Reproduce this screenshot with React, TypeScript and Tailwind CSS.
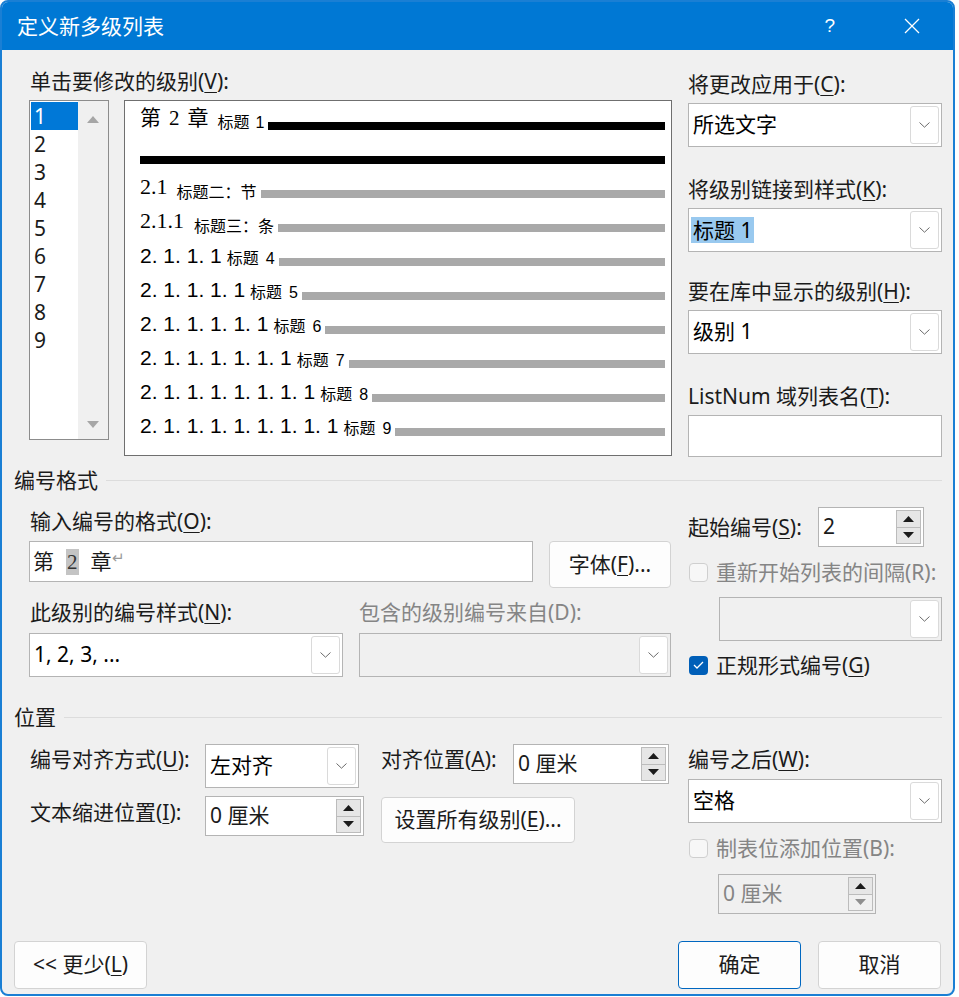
import React from "react";

const ui = "font-['Noto_Sans','Noto_Sans_CJK_SC',sans-serif]";

function U({ children }: { children: React.ReactNode }) {
  return <span className="underline underline-offset-[3px] decoration-1">{children}</span>;
}

function Chevron() {
  return (
    <svg width="11" height="6" viewBox="0 0 11 6" className="block">
      <polyline points="0.5,0.5 5.5,5.2 10.5,0.5" fill="none" stroke="#6b6b6b" strokeWidth="1" />
    </svg>
  );
}

function Tri({ up = false, color = "#1b1b1b" }: { up?: boolean; color?: string }) {
  return (
    <svg width="11" height="6" viewBox="0 0 11 6" className="block">
      {up ? <polygon points="0,6 11,6 5.5,0" fill={color} /> : <polygon points="0,0 11,0 5.5,6" fill={color} />}
    </svg>
  );
}

function Label({ children, className = "", disabled = false }: { children: React.ReactNode; className?: string; disabled?: boolean }) {
  return (
    <div className={`h-[28px] flex items-center leading-[28px] whitespace-nowrap ${disabled ? "text-[#858585]" : "text-[#1b1b1b]"} ${className}`}>
      {children}
    </div>
  );
}

function Combo({ children, className = "", disabled = false }: { children?: React.ReactNode; className?: string; disabled?: boolean }) {
  return (
    <div className={`flex h-[44px] border border-[#b4b4b4] ${disabled ? "bg-[#f0f0f0]" : "bg-white"} ${className}`}>
      <div className="flex-1 flex items-center pl-[4px] overflow-hidden whitespace-nowrap">{children}</div>
      <div className="w-[29px] my-[2px] mr-[2px] rounded-[3px] border border-[#dadada] bg-white flex items-center justify-center">
        <Chevron />
      </div>
    </div>
  );
}

function Spin({ value, className = "", disabled = false }: { value: string; className?: string; disabled?: boolean }) {
  return (
    <div className={`flex h-[40px] border border-[#b4b4b4] ${disabled ? "bg-[#f0f0f0] text-[#858585]" : "bg-white text-[#1b1b1b]"} ${className}`}>
      <div className="flex-1 flex items-center pl-[4px] whitespace-nowrap">{value}</div>
      <div className="w-[27px] flex flex-col py-[2px] pr-[2px]">
        <div className="flex-1 border border-[#bcbcbc] bg-[#e6e6e6] flex items-center justify-center">
          <Tri up />
        </div>
        <div className={`flex-1 border border-t-0 border-[#bcbcbc] flex items-center justify-center ${disabled ? "bg-[#f0f0f0]" : "bg-[#e6e6e6]"}`}>
          <Tri color={disabled ? "#8f8f8f" : "#1b1b1b"} />
        </div>
      </div>
    </div>
  );
}

function Btn({ children, className = "", primary = false }: { children: React.ReactNode; className?: string; primary?: boolean }) {
  return (
    <div
      className={`flex items-center justify-center rounded-[4px] border bg-[#fdfdfd] text-[#1b1b1b] whitespace-nowrap ${
        primary ? "border-[#0067c0]" : "border-[#d3d3d3]"
      } ${className}`}
    >
      {children}
    </div>
  );
}

function Check({ checked = false }: { checked?: boolean }) {
  if (checked) {
    return (
      <div className="w-[19px] h-[19px] rounded-[4px] bg-[#005fb8] flex items-center justify-center">
        <svg width="11" height="8" viewBox="0 0 11 8">
          <polyline points="1,4 4,7 10,1" fill="none" stroke="white" strokeWidth="1.3" />
        </svg>
      </div>
    );
  }
  return <div className="w-[19px] h-[19px] rounded-[4px] border border-[#cfcfcf] bg-[#f7f7f7]" />;
}

function Heading({ text, className = "" }: { text: string; className?: string }) {
  return (
    <div className={`flex items-center h-[28px] pl-[12px] pr-[11px] ${className}`}>
      <span className="leading-[28px] text-[#1b1b1b]">{text}</span>
      <div className="flex-1 h-px bg-[#dcdcdc] ml-[8px]" />
    </div>
  );
}

const deep = ["2. 1. 1. 1", "2. 1. 1. 1. 1", "2. 1. 1. 1. 1. 1", "2. 1. 1. 1. 1. 1. 1", "2. 1. 1. 1. 1. 1. 1. 1", "2. 1. 1. 1. 1. 1. 1. 1. 1"];

function Preview() {
  const small = "text-[16px] leading-none font-['Noto_Sans_CJK_SC',sans-serif] relative top-[1px]";
  return (
    <div className="w-[548px] h-[356px] border border-[#6f6f6f] bg-white pl-[15px] pr-[6px] flex flex-col">
      <div className="h-[29px] flex items-end">
        <span className="text-[21px] leading-none font-['Liberation_Serif','Noto_Sans_CJK_SC',serif] relative top-[-1px]">
          第<span className="ml-[8px]">2</span>
          <span className="ml-[8px]">章</span>
        </span>
        <span className={`ml-[9px] ${small}`}>
          标题<span className="ml-[6px] font-['Liberation_Sans',sans-serif]">1</span>
        </span>
        <div className="flex-1 h-[8px] bg-black ml-[4px]" />
      </div>
      <div className="h-[34px] flex items-end">
        <div className="flex-1 h-[8px] bg-black" />
      </div>
      <div className="h-[34px] flex items-end">
        <span className="text-[22px] leading-none font-['Liberation_Serif',serif]">2.1</span>
        <span className={`ml-[9px] ${small}`}>标题二：节</span>
        <div className="flex-1 h-[8px] bg-[#a9a9a9] ml-[4px]" />
      </div>
      <div className="h-[34px] flex items-end">
        <span className="text-[22px] leading-none font-['Liberation_Serif',serif]">2.1.1</span>
        <span className={`ml-[10px] ${small}`}>标题三：条</span>
        <div className="flex-1 h-[8px] bg-[#a9a9a9] ml-[4px]" />
      </div>
      {deep.map((n, i) => (
        <div key={n} className="h-[34px] flex items-end">
          <span className="text-[21px] leading-none font-['Liberation_Sans',sans-serif]">{n}</span>
          <span className={`ml-[5px] ${small}`}>
            标题<span className="ml-[7px] font-['Liberation_Sans',sans-serif]">{i + 4}</span>
          </span>
          <div className="flex-1 h-[8px] bg-[#a9a9a9] ml-[4px]" />
        </div>
      ))}
    </div>
  );
}

function LevelList() {
  return (
    <div className="flex w-[80px] h-[340px] border border-[#8c8c8c] bg-white">
      <div className="w-[48px] pt-[1px] pl-[1px] flex flex-col">
        {[1, 2, 3, 4, 5, 6, 7, 8, 9].map((n) => (
          <div
            key={n}
            className={`h-[28px] pl-[3px] leading-[28px] text-[21px] ${n === 1 ? "bg-[#0078d7] text-white" : "text-[#1b1b1b]"}`}
          >
            {n}
          </div>
        ))}
      </div>
      <div className="flex-1 bg-[#f0f0f0] flex flex-col items-center justify-between pt-[15px] pb-[11px]">
        <svg width="12" height="7" viewBox="0 0 12 7"><polygon points="0,7 12,7 6,0" fill="#a6a6a6" /></svg>
        <svg width="12" height="7" viewBox="0 0 12 7"><polygon points="0,0 12,0 6,7" fill="#a6a6a6" /></svg>
      </div>
    </div>
  );
}

export default function App() {
  return (
    <div className={`w-[959px] h-[997px] bg-white overflow-hidden ${ui} text-[21px]`}>
      <div className="w-[955px] h-[996px] rounded-[8px] border-2 border-[#1a7fd4] bg-[#f0f0f0] overflow-hidden flex flex-col">
        {/* title bar */}
        <div className="h-[48px] bg-[#0078d4] flex items-center pl-[15px] text-white shrink-0">
          <span className="leading-[28px]">定义新多级列表</span>
          <span className="ml-auto text-[19px] font-light font-['Liberation_Sans',sans-serif] mr-[69px]">?</span>
          <svg width="16" height="16" viewBox="0 0 16 16" className="mr-[33px]">
            <line x1="1" y1="1" x2="15" y2="15" stroke="white" strokeWidth="1.3" />
            <line x1="15" y1="1" x2="1" y2="15" stroke="white" strokeWidth="1.3" />
          </svg>
        </div>

        {/* levels / preview / right fields */}
        <div className="flex h-[407px] shrink-0">
          <div className="ml-[27px] w-[643px]">
            <Label className="mt-[17px] pl-[1px]">
              单击要修改的级别(<U>V</U>):
            </Label>
            <div className="mt-[5px] flex items-start">
              <LevelList />
              <div className="ml-[15px]">
                <Preview />
              </div>
            </div>
          </div>
          <div className="ml-[16px] w-[254px]">
            <Label className="mt-[20px]">
              将更改应用于(<U>C</U>):
            </Label>
            <Combo className="mt-[5px]">所选文字</Combo>
            <Label className="mt-[28px]">
              将级别链接到样式(<U>K</U>):
            </Label>
            <Combo className="mt-[5px]">
              <span className="bg-[#99c9ef] -ml-[2px] px-[2px] leading-[26px]">标题 1</span>
            </Combo>
            <Label className="mt-[25px]">
              要在库中显示的级别(<U>H</U>):
            </Label>
            <Combo className="mt-[5px]">级别 1</Combo>
            <Label className="mt-[28px]">
              ListNum 域列表名(<U>T</U>):
            </Label>
            <div className="mt-[5px] h-[42px] border border-[#b4b4b4] bg-white" />
          </div>
        </div>

        <Heading text="编号格式" className="mt-[9px]" />

        {/* number format */}
        <div className="flex h-[185px] shrink-0">
          <div className="ml-[27px] w-[643px]">
            <Label className="mt-[13px] pl-[1px]">
              输入编号的格式(<U>O</U>):
            </Label>
            <div className="mt-[6px] flex items-start">
              <div className="w-[504px] h-[41px] border border-[#b4b4b4] bg-white flex items-center pl-[3px] text-[#1b1b1b]">
                <span>第</span>
                <span className="ml-[12px] bg-[#c4c4c4] px-[1px] leading-[26px] font-['Liberation_Serif',serif] text-[#333]">2</span>
                <span className="ml-[12px]">章</span>
                <span className="text-[#9a9a9a] text-[15px] relative top-[-4px]">↵</span>
              </div>
              <Btn className="ml-[16px] w-[122px] h-[47px]">
                字体(<U>F</U>)...
              </Btn>
            </div>
            <div className="mt-[10px] flex">
              <Label className="w-[330px] pl-[1px]">
                此级别的编号样式(<U>N</U>):
              </Label>
              <Label disabled>包含的级别编号来自(D):</Label>
            </div>
            <div className="mt-[7px] flex">
              <Combo className="w-[314px]">1, 2, 3, ...</Combo>
              <Combo className="ml-[16px] w-[312px]" disabled />
            </div>
          </div>
          <div className="ml-[16px] w-[254px]">
            <div className="mt-[13px] h-[40px] flex items-center">
              <Label className="w-[130px]">
                起始编号(<U>S</U>):
              </Label>
              <Spin value="2" className="w-[106px]" />
            </div>
            <div className="mt-[11px] h-[28px] flex items-center">
              <div className="ml-[1px]">
                <Check />
              </div>
              <Label disabled className="ml-[8px]">
                重新开始列表的间隔(R):
              </Label>
            </div>
            <Combo className="mt-[11px] ml-[31px] w-[223px]" disabled />
            <div className="mt-[10px] h-[28px] flex items-center">
              <div className="ml-[1px]">
                <Check checked />
              </div>
              <Label className="ml-[8px]">
                正规形式编号(<U>G</U>)
              </Label>
            </div>
          </div>
        </div>

        <Heading text="位置" className="mt-[24px]" />

        {/* position */}
        <div className="flex h-[183px] shrink-0">
          <div className="ml-[27px] w-[643px]">
            <div className="mt-[13px] flex items-start">
              <Label className="w-[176px] mt-[1px] pl-[1px]">
                编号对齐方式(<U>U</U>):
              </Label>
              <Combo className="w-[154px]">左对齐</Combo>
              <Label className="ml-[22px] w-[132px] mt-[1px]">
                对齐位置(<U>A</U>):
              </Label>
              <Spin value="0 厘米" className="w-[156px]" />
            </div>
            <div className="mt-[8px] flex items-start">
              <Label className="w-[176px] mt-[2px] pl-[1px]">
                文本缩进位置(<U>I</U>):
              </Label>
              <Spin value="0 厘米" className="w-[159px]" />
              <Btn className="ml-[17px] mt-[1px] w-[194px] h-[46px]">
                设置所有级别(<U>E</U>)...
              </Btn>
            </div>
          </div>
          <div className="ml-[16px] w-[254px]">
            <Label className="mt-[14px]">
              编号之后(<U>W</U>):
            </Label>
            <Combo className="mt-[6px]">空格</Combo>
            <div className="mt-[11px] h-[28px] flex items-center">
              <div className="ml-[1px]">
                <Check />
              </div>
              <Label disabled className="ml-[8px]">
                制表位添加位置(B):
              </Label>
            </div>
            <Spin value="0 厘米" disabled className="mt-[12px] ml-[30px] w-[158px]" />
          </div>
        </div>

        {/* footer */}
        <div className="mt-[27px] flex pl-[12px] pr-[12px]">
          <Btn className="w-[133px] h-[48px]">
            &lt;&lt; 更少(<U>L</U>)
          </Btn>
          <Btn primary className="ml-auto w-[123px] h-[48px]">
            确定
          </Btn>
          <Btn className="ml-[17px] w-[123px] h-[48px]">取消</Btn>
        </div>
      </div>
    </div>
  );
}
